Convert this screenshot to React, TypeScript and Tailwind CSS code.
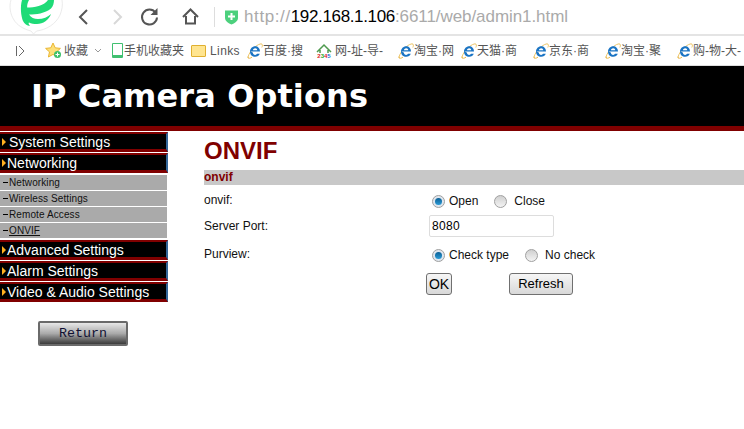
import React from "react";

const sans = "font-['Liberation_Sans',Arial,'Noto_Sans_CJK_SC',sans-serif]";

const IE = () => (
  <svg width="16" height="16" viewBox="0 0 16 16" className="shrink-0">
    <path d="M1.500 15C-.5 12.500 8 1.500 14 .8c1.800 0 1.600 2.200.8 3.700" fill="none" stroke="#ecc66a" strokeWidth="1" />
    <path d="M3.200 8.600h9.800C13 5.200 10.800 3.200 8.200 3.200 5.300 3.200 3 5.600 3 8.700c0 3 2.300 5.100 5.200 5.100 2.200 0 3.900-1.100 4.600-3H10c-.5.800-1 1.100-1.800 1.100-1.300 0-2.300-.9-2.400-2.300zM5.900 7.200c.2-1.200 1.100-2 2.300-2s2 .8 2.100 2z" fill="#1a74c4" fillRule="evenodd" />
    <path d="M1 13.500c-1 2.200 2 2.300 4 .6" fill="none" stroke="#e9b84e" strokeWidth="1" />
  </svg>
);

const Bookmark = ({ icon, label, w, gap = "gap-0", track = "" }: { icon: React.ReactNode; label: string; w: string; gap?: string; track?: string }) => (
  <div className={`flex items-center shrink-0 ${w} ${gap}`}>
    {icon}
    <span className={`text-[12px] text-[#555] whitespace-nowrap ${track}`}>{label}</span>
  </div>
);

const MenuItem = ({ label, pad = "pl-[1px]" }: { label: string; pad?: string }) => (
  <div className="h-[20px] mb-px border-t-2 border-b-[3px] border-[#800000] bg-black border-r-[2px] border-r-[#336699] flex items-center pl-[2px] text-white leading-none">
    <span className="w-0 h-0 border-y-[4px] border-y-transparent border-l-[4px] border-l-[#ffb020] shrink-0" />
    <span className={`text-[14px] ${pad} whitespace-nowrap`}>{label}</span>
  </div>
);

const SubItem = ({ label, u }: { label: string; u?: boolean }) => (
  <div className="h-[15px] mb-px mr-px bg-[#aaaaaa] flex items-center pl-[3px] text-[10px] text-[#111] leading-none tracking-[0.1px]">
    <span className="w-[5px] h-px bg-black mr-px" />
    <span className={u ? "underline" : ""}>{label}</span>
  </div>
);

const Radio = ({ on }: { on?: boolean }) => (
  <span className={`w-[13px] h-[13px] rounded-full border border-[#a0a0a0] flex items-center justify-center shrink-0 ${on ? "bg-[#dfe6ee]" : "bg-gradient-to-b from-[#d0d0d0] to-[#f4f4f4]"}`}>
    {on && <span className="w-[7px] h-[7px] rounded-full bg-gradient-to-b from-[#0b5f95] to-[#2a9bd6]" />}
  </span>
);

const Row = ({ label, className, children }: { label: string; className: string; children: React.ReactNode }) => (
  <div className={`flex ${className}`}>
    <div className="w-[226px] text-[12px] text-[#111] leading-none shrink-0">{label}</div>
    {children}
  </div>
);

const Btn = ({ label, className }: { label: string; className: string }) => (
  <div className={`h-[22px] border border-[#707070] rounded-[3px] bg-gradient-to-b from-[#f6f6f6] to-[#d8d8d8] flex items-center justify-center text-black ${className}`}>{label}</div>
);

export default function App() {
  return (
    <div className={`w-[744px] h-[429px] bg-white overflow-hidden ${sans}`}>
      {/* toolbar */}
      <div className="h-[36px] border-b-2 border-[#e4e4e4] flex items-center relative">
        <svg className="absolute left-0 top-0" width="74" height="36" viewBox="0 0 74 36">
          <path d="M11 0c-2 6-1 14 3 20 3 5 9 9 17 11l2.500 3 3-3C46 30 56 24 60 15c2-5 3-10 2-15" fill="#fff" stroke="#ebebeb" strokeWidth="1" />
          <path d="M22 0h7c-1.500 3-2 5-1.800 7.500C34 7.500 44 6 48 0h6c0 3-1 6.500-3 8.500-6 5-15 6-22 6 2 3 5 4.500 9 4.500 5 0 10-2 13-5-2 6-8 10-14 10-3 0-6-.5-8-1.500-1 .5 0 2 1 3.500-3-.5-5.500-2-7-5-2-5-3-14-1-21z" fill="#1edb77" />
        </svg>
        <svg width="150" height="34" viewBox="0 0 150 34" className="shrink-0 ml-[64px]">
          <path d="M23 10l-7 7 7 7" fill="none" stroke="#555" strokeWidth="2" />
          <path d="M50 10l7 7-7 7" fill="none" stroke="#d8d8d8" strokeWidth="2" />
          <path d="M91.500 12.500a7.500 7.500 0 1 0 1.500 5" fill="none" stroke="#555" strokeWidth="2" />
          <path d="M93.500 8v7h-7z" fill="#555" />
          <path d="M119 17l7.500-7.500L134 17M122 16v7.500h9V16" fill="none" stroke="#555" strokeWidth="2" />
        </svg>
        <div className="w-px h-[20px] bg-[#ddd]" />
        <svg width="15" height="16" viewBox="0 0 15 16" className="shrink-0 ml-[9px]">
          <path d="M1 1.500h13V9c0 3-3.500 5.500-6.500 6.500C4.500 14.500 1 12 1 9z" fill="#4cd07d" />
          <path d="M7.500 4v7M4 7.500h7" stroke="#fff" strokeWidth="2" />
        </svg>
        <div className="ml-[5px] text-[17px] leading-none whitespace-nowrap tracking-[-0.07px] pb-[1px]">
          <span className="text-[#aaa] tracking-[0.6px]">http://</span>
          <span className="text-black tracking-[-0.35px]">192.168.1.106</span>
          <span className="text-[#aaa]">:6611/web/admin1.html</span>
        </div>
      </div>
      {/* bookmarks */}
      <div className="h-[30px] border-b border-[#ddd] flex items-center text-[#555]">
        <svg width="45" height="14" viewBox="0 0 45 14" className="shrink-0">
          <path d="M16.500 2v10M19 2l5 5-5 5" fill="none" stroke="#666" strokeWidth="1" />
        </svg>
        <div className="flex items-center w-[67px] shrink-0">
          <svg width="18" height="17" viewBox="0 0 18 17" className="shrink-0">
            <path d="M8 1l2.200 4.800 5.200.6-3.900 3.500 1.100 5.100L8 12.400 3.400 15l1.100-5.100L.6 6.400l5.200-.6z" fill="#fde07a" stroke="#eab632" strokeWidth="1" />
            <circle cx="12.500" cy="12.500" r="3.500" fill="#3cc06a" />
            <path d="M12.500 10.500v4M10.500 12.500h4" stroke="#fff" strokeWidth="1" />
          </svg>
          <span className="text-[12px] ml-[1px]">收藏</span>
          <svg width="8" height="6" viewBox="0 0 8 6" className="ml-[6px]"><path d="M1 1l3 3 3-3" fill="none" stroke="#999" /></svg>
        </div>
        <Bookmark w="w-[79px]" gap="gap-[1px]" label="手机收藏夹" icon={<span className="w-[11px] h-[15px] border border-[#40c070] border-b-[3px] rounded-[1px] shrink-0" />} />
        <Bookmark w="w-[56px]" gap="gap-[4px]" track="tracking-[0.4px]" label="Links" icon={<span className="w-[15px] h-[12px] bg-[#ffe590] border border-[#e0b030] rounded-[1px] shrink-0" />} />
        <Bookmark w="w-[69px]" label="百度·搜" icon={<IE />} />
        <Bookmark w="w-[82px]" gap="gap-[3px]" label="网-址-导-" icon={
          <span className="w-[16px] h-[16px] shrink-0 relative flex flex-col items-center justify-end leading-none">
            <svg width="16" height="10" viewBox="0 0 16 10" className="absolute top-0 left-0"><path d="M1 9l7-7 7 7M4 7v3M12 7v3" fill="none" stroke="#4f9a4f" strokeWidth="1.500" /></svg>
            <span className="text-[6px] font-bold">
              <span className="text-[#d22]">2</span><span className="text-[#2a2]">3</span><span className="text-[#d22]">4</span><span className="text-[#27c]">5</span>
            </span>
          </span>} />
        <Bookmark w="w-[63px]" label="淘宝·网" icon={<IE />} />
        <Bookmark w="w-[72px]" label="天猫·商" icon={<IE />} />
        <Bookmark w="w-[72px]" label="京东·商" icon={<IE />} />
        <Bookmark w="w-[72px]" label="淘宝·聚" icon={<IE />} />
        <Bookmark w="w-[72px]" label="购-物-大-" icon={<IE />} />
      </div>
      {/* header */}
      <div className="h-[65px] bg-black border-b-[5px] border-[#800000] pl-[31px] flex items-center">
        <h1 className="text-[32px] font-bold text-white leading-none tracking-[0.1px] font-['DejaVu_Sans',sans-serif]">IP Camera Options</h1>
      </div>
      <div className="flex pt-px">
        {/* sidebar */}
        <div className="w-[168px] shrink-0">
          <MenuItem label="System Settings" pad="pl-[3px]" />
          <MenuItem label="Networking" />
          <div className="pt-px pb-px">
            <SubItem label="Networking" />
            <SubItem label="Wireless Settings" />
            <SubItem label="Remote Access" />
            <SubItem label="ONVIF" u />
          </div>
          <MenuItem label="Advanced Settings" />
          <MenuItem label="Alarm Settings" />
          <MenuItem label="Video & Audio Settings" />
          <div className="ml-[38px] mt-[19px] w-[90px] h-[25px] border-2 border-[#6a6a6a] rounded-[2px] bg-gradient-to-b from-[#e8e8e8] via-[#aaa] to-[#3c3c3c] flex items-center justify-center text-[13.33px] text-[#111133] font-['Liberation_Mono',monospace]">Return</div>
        </div>
        {/* content */}
        <div className="flex-1 pl-[36px] min-w-0">
          <h2 className="text-[24px] font-bold text-[#800000] leading-none pt-[7px] h-[38px]">ONVIF</h2>
          <div className="h-[15px] bg-[#c8c8c8] text-[#800000] text-[12px] font-bold leading-[15px]">onvif</div>
          <Row label="onvif:" className="mt-[9px] h-[26px]">
            <div className="flex items-start gap-[4px] text-[12px] text-[#111] leading-none pl-[2px] mt-px">
              <Radio on /><span>Open</span>
              <span className="w-[8px]" /><Radio /><span className="ml-[3px]">Close</span>
            </div>
          </Row>
          <Row label="Server Port:" className="h-[28px]">
            <div className="w-[125px] h-[22px] border border-[#ddd] rounded-[2px] text-[12px] text-black leading-[20px] tracking-[0.3px] pl-[2px] -mt-[5px] -ml-px">8080</div>
          </Row>
          <Row label="Purview:" className="h-[25px]">
            <div className="flex items-start gap-[4px] text-[12px] text-[#111] leading-none pl-[2px] mt-px">
              <Radio on /><span>Check type</span>
              <span className="w-[8px]" /><Radio /><span className="ml-[3px]">No check</span>
            </div>
          </Row>
          <div className="flex pl-[222px]">
            <Btn label="OK" className="w-[26px] text-[14px]" />
            <Btn label="Refresh" className="w-[64px] ml-[57px] text-[13px]" />
          </div>
        </div>
      </div>
    </div>
  );
}
